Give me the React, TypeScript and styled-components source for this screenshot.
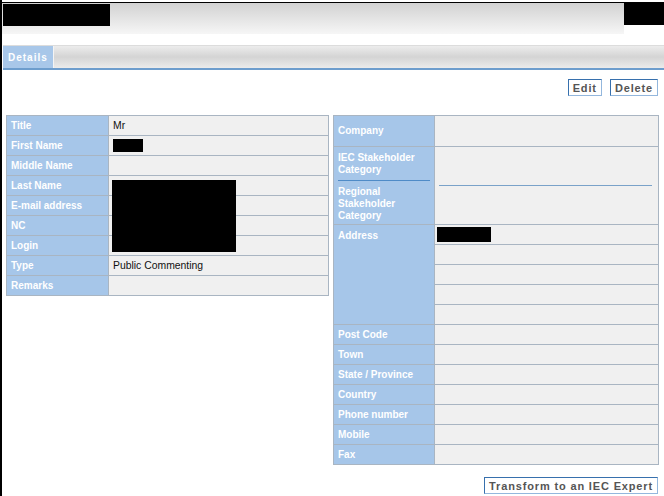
import React from 'react';
import styled, { createGlobalStyle } from 'styled-components';

const GlobalStyle = createGlobalStyle`
  html, body {
    margin: 0;
    padding: 0;
    background: #fff;
    font-family: 'Liberation Sans', Arial, sans-serif;
  }
`;

const Page = styled.div`
  min-height: 496px;
  border-left: 2px solid #000;
  box-sizing: border-box;
  padding-top: 2px;
`;

const Header = styled.div`
  position: relative;
  height: 30px;
  border-top: 1px solid #000;
  margin-right: 40px;
  background: linear-gradient(#d2d2d2, #f6f6f6);
  padding: 1px 0 0 1px;
`;

const Redact = styled.div<{ w: number; h: number }>`
  background: #000;
  width: ${(p) => p.w}px;
  height: ${(p) => p.h}px;
`;

const CornerBox = styled.div`
  position: absolute;
  right: -40px;
  top: -1px;
  width: 40px;
  height: 23px;
  background: #000;
`;

const TabBar = styled.div`
  margin-top: 11px;
  margin-left: 1px;
  height: 22px;
  display: flex;
  border-top: 1px solid #dcdcdc;
  border-bottom: 2px solid #6d9dcd;
  background: linear-gradient(#ececec, #d4d4d4 50%, #ebebeb);
`;

const Tab = styled.div`
  width: 51px;
  background: #a8c7e9;
  border-right: 1px solid #f4f4f4;
  color: #fff;
  font-weight: bold;
  font-size: 10px;
  letter-spacing: 1px;
  display: flex;
  align-items: center;
  padding-left: 5px;
  box-sizing: border-box;
`;

const Actions = styled.div`
  display: flex;
  justify-content: flex-end;
  gap: 8px;
  padding: 9px 6px 0 0;
  height: 18px;
`;

const Button = styled.button`
  font-family: 'Liberation Sans', Arial, sans-serif;
  background: #fff;
  border: 1px solid;
  border-color: #3770ad #93b7dd #93b7dd #3770ad;
  color: #555;
  font-weight: bold;
  font-size: 11px;
  letter-spacing: 0.85px;
  height: 17px;
  padding: 0 4px;
  margin: 0;
  line-height: 14px;
`;

const Columns = styled.div`
  display: flex;
  align-items: flex-start;
  gap: 4px;
  padding: 18px 5px 0 4px;
`;

const Table = styled.table<{ w: number }>`
  width: ${(p) => p.w}px;
  border-collapse: collapse;
  border: 1px solid #9eadbd;
  font-size: 10px;
  td {
    border: 1px solid #a9b5c2;
    padding: 0 4px;
    height: 20px;
    box-sizing: border-box;
  }
`;

const Label = styled.td<{ w: number; top?: boolean }>`
  width: ${(p) => p.w}px;
  background: #a6c6e9;
  color: #fff;
  font-weight: bold;
  vertical-align: ${(p) => (p.top ? 'top' : 'middle')};
  padding-top: ${(p) => (p.top ? '5px' : '0')} !important;
  line-height: 12px;
`;

const Value = styled.td`
  background: #f0f0f0;
  color: #111;
  font-size: 10.4px;
  position: relative;
`;

const SubLabel = styled.div<{ h: number; line?: boolean }>`
  height: ${(p) => p.h}px;
  padding-top: 5px;
  box-sizing: border-box;
  border-bottom: ${(p) => (p.line ? '1px solid #4f8bc7' : 'none')};
`;

const SubValue = styled.div<{ line?: boolean }>`
  height: 38px;
  margin: 0 6px 0 4px;
  border-bottom: ${(p) => (p.line ? '1px solid #7aa2c9' : 'none')};
`;

const Cover = styled.div`
  position: absolute;
  z-index: 1;
  left: 3px;
  top: 4px;
  width: 124px;
  height: 72px;
  background: #000;
`;

const Footer = styled.div`
  display: flex;
  justify-content: flex-end;
  padding: 12px 6px 0 0;
`;

const leftRows = ['Title', 'First Name', 'Middle Name', 'Last Name', 'E-mail address', 'NC', 'Login', 'Type', 'Remarks'];
const rightRows = ['Post Code', 'Town', 'State / Province', 'Country', 'Phone number', 'Mobile', 'Fax'];

export default function App() {
  return (
    <Page>
      <GlobalStyle />
      <Header>
        <Redact w={107} h={22} />
        <CornerBox />
      </Header>
      <TabBar>
        <Tab>Details</Tab>
      </TabBar>
      <Actions>
        <Button>Edit</Button>
        <Button>Delete</Button>
      </Actions>
      <Columns>
        <Table w={323}>
          <tbody>
            {leftRows.map((r) => (
              <tr key={r}>
                <Label w={102}>{r}</Label>
                <Value>
                  {r === 'Title' && 'Mr'}
                  {r === 'First Name' && <Redact w={30} h={13} />}
                  {r === 'Last Name' && <Cover />}
                  {r === 'Type' && 'Public Commenting'}
                </Value>
              </tr>
            ))}
          </tbody>
        </Table>
        <Table w={326}>
          <tbody>
            <tr>
              <Label w={101} style={{ height: 31 }}>Company</Label>
              <Value />
            </tr>
            <tr>
              <Label w={101} style={{ verticalAlign: 'top' }}>
                <SubLabel h={34} line>IEC Stakeholder Category</SubLabel>
                <SubLabel h={43}>Regional Stakeholder Category</SubLabel>
              </Label>
              <Value style={{ padding: 0, verticalAlign: 'top' }}>
                <SubValue line />
              </Value>
            </tr>
            <tr>
              <Label w={101} rowSpan={5} top>Address</Label>
              <Value style={{ padding: '0 2px' }}>
                <Redact w={54} h={15} />
              </Value>
            </tr>
            {[1, 2, 3, 4].map((i) => (
              <tr key={i}>
                <Value />
              </tr>
            ))}
            {rightRows.map((r) => (
              <tr key={r}>
                <Label w={101}>{r}</Label>
                <Value />
              </tr>
            ))}
          </tbody>
        </Table>
      </Columns>
      <Footer>
        <Button>Transform to an IEC Expert</Button>
      </Footer>
    </Page>
  );
}
